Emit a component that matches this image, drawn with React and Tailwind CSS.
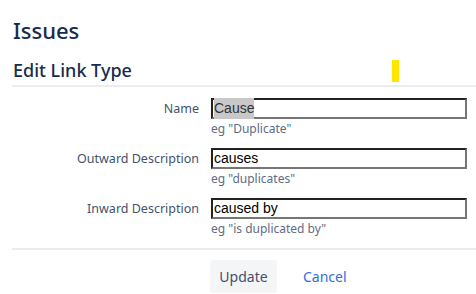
export default function App() {
  const rows = [
    { label: 'Name', value: 'Cause', hint: 'eg "Duplicate"', selected: true },
    { label: 'Outward Description', value: 'causes', hint: 'eg "duplicates"' },
    { label: 'Inward Description', value: 'caused by', hint: 'eg "is duplicated by"' },
  ];

  return (
    <div className="w-[476px] h-[294px] overflow-hidden bg-white pl-[12px] font-['Noto_Sans',sans-serif] text-[#172b4d]">
      <h1 className="pt-[16px] pl-px text-[22px] leading-[28px] font-medium">Issues</h1>
      <div className="relative mt-[15px] border-b-2 border-[#ebecf0] pb-[4px]">
        <h2 className="pl-px text-[18px] leading-[22px] font-medium">Edit Link Type</h2>
        <div className="absolute left-[380px] top-[1px] w-[7px] h-[22px] bg-[#ffe500]"></div>
      </div>

      <form className="pt-[11px]">
        {rows.map((row) => (
          <div key={row.label} className="flex h-[50px]">
            <label className="w-[199px] pt-[2px] pr-[12px] text-right text-[12.5px] leading-[18px] text-[#42526e]">
              {row.label}
            </label>
            <div className="flex flex-col">
              <div className="w-[256px] h-[21px] border-2 border-t-[#222] border-l-[#222] border-r-[#767676] border-b-[#767676] px-[1px] flex items-center font-['Liberation_Sans',sans-serif] text-[14px] text-black">
                <span className={row.selected ? 'bg-[#c8c8c8] text-[#333]' : ''}>{row.value}</span>
              </div>
              <div className="pt-[2px] text-[12px] leading-[16px] text-[#5e6c84]">{row.hint}</div>
            </div>
          </div>
        ))}

        <div className="border-t-2 border-[#ebecf0] flex pt-[10px] pl-[198px]">
          <button type="button" className="h-[33px] w-[67px] rounded-[3px] bg-[#f4f5f7] text-[14px] text-[#42526e]">
            Update
          </button>
          <a href="#" className="ml-[26px] h-[33px] leading-[33px] text-[14px] text-[#2f6fdc]">
            Cancel
          </a>
        </div>
      </form>
    </div>
  );
}
